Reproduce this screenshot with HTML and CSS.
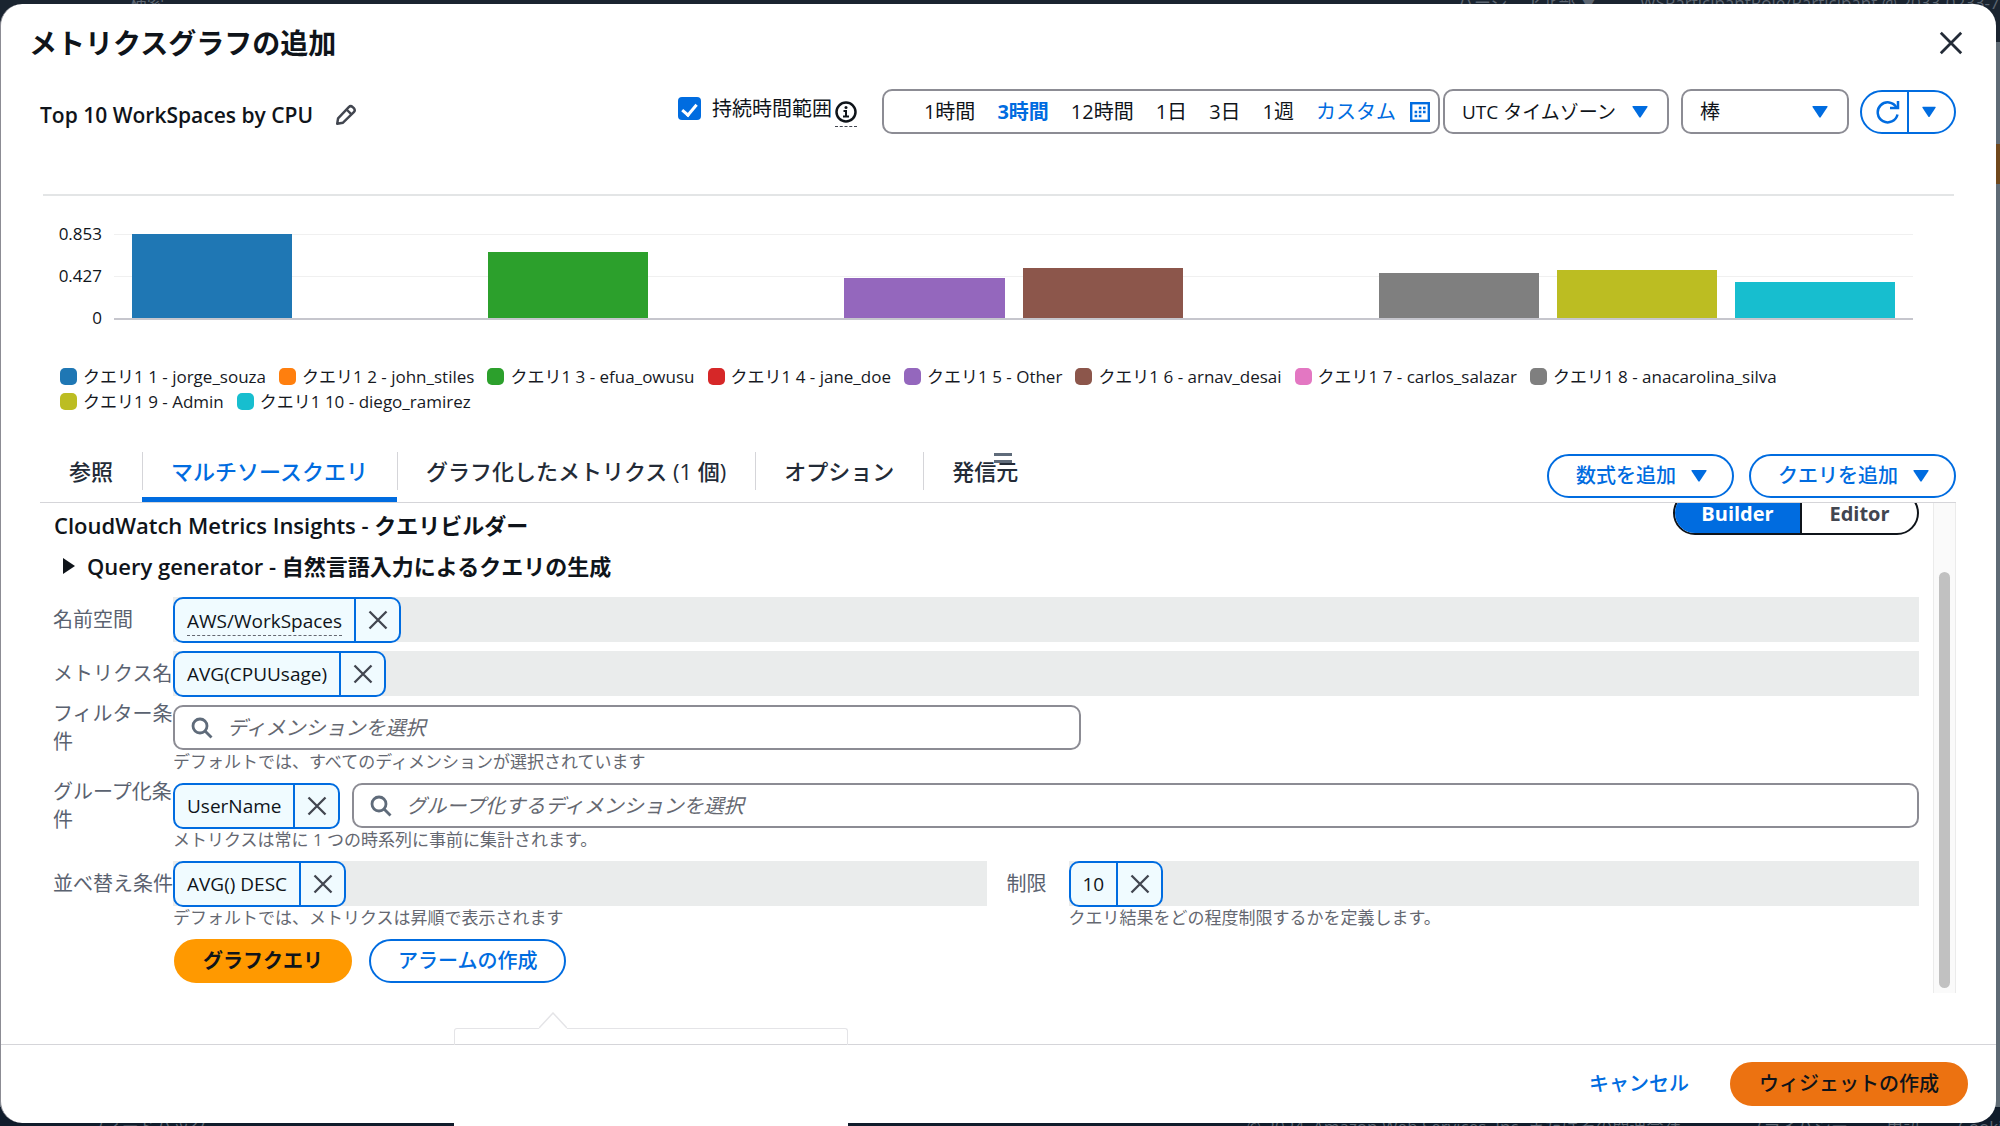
FILE: index.html
```html
<!DOCTYPE html>
<html lang="ja">
<head>
<meta charset="utf-8">
<title>メトリクスグラフの追加</title>
<link rel="stylesheet" href="styles.css">
</head>
<body>
<svg class="sprite" aria-hidden="true">
  <symbol id="x" viewBox="0 0 20 20"><path d="M1.500 1.500l17 17M18.500 1.500l-17 17" fill="none" stroke="currentColor" stroke-width="2.300"/></symbol>
  <symbol id="down" viewBox="0 0 16 12"><path d="M1 0h14q1 0 .5 1L8.700 11.300q-.7.900-1.400 0L.5 1Q0 0 1 0z" fill="currentColor"/></symbol>
  <symbol id="search" viewBox="0 0 22 22"><g fill="none" stroke="currentColor" stroke-width="2.800"><circle cx="9" cy="9" r="7"/><path d="M14 14l6.500 6.500"/></g></symbol>
</svg>

<div class="backdrop" aria-hidden="true">
  <div class="backdrop-nav"><span class="nav-search">検索</span><span class="nav-region">バージニア北部 ▼</span><span class="nav-user">WSParticipantRole/Participant @ 2033-0233-7</span></div>
  <div class="backdrop-side"></div>
  <div class="backdrop-foot"><span class="foot-left">フィードバック</span><span class="foot-copy">© 2024, Amazon Web Services, Inc. またはその関連会社</span><span class="foot-privacy">プライバシー</span><span>用語</span><span>Cookie</span></div>
  <div class="backdrop-notch"></div>
</div>

<main class="modal" role="dialog" aria-labelledby="dialog-title">
  <header class="modal-head">
    <h1 id="dialog-title">メトリクスグラフの追加</h1>
    <button class="bare close" aria-label="閉じる"><svg width="24" height="24"><use href="#x"/></svg></button>
  </header>

  <section class="body">
    <div class="toolbar">
      <div class="graph-name">
        <h2>Top 10 WorkSpaces by CPU</h2>
        <button class="bare" aria-label="名前を編集"><svg width="22" height="22" viewBox="0 0 20 20" fill="none" stroke="#424650" stroke-width="2.200" stroke-linejoin="round"><path d="M2 18l.8-5L12.500 2.800q1.700-1.700 3.600 0l1 1q1.700 1.800 0 3.500L7.300 17z"/><path d="M10.500 5l4.500 4.500"/></svg></button>
      </div>
      <div class="persist">
        <input type="checkbox" id="persist" checked>
        <label for="persist">持続時間範囲</label>
        <button class="bare info" aria-label="情報"><svg width="22" height="22" viewBox="0 0 22 22"><circle cx="11" cy="11" r="9.500" fill="none" stroke="#0f141a" stroke-width="2.500"/><circle cx="11" cy="6.600" r="1.500" fill="#0f141a"/><path d="M8.500 10H11v5M8 15.500h6" fill="none" stroke="#0f141a" stroke-width="2"/></svg></button>
      </div>
      <div class="ranges" role="group" aria-label="時間範囲">
        <button>1時間</button><button class="current">3時間</button><button>12時間</button><button>1日</button><button>3日</button><button>1週</button>
        <button class="custom">カスタム
          <svg width="20" height="20" viewBox="0 0 20 20"><rect x="1.200" y="1.200" width="17.600" height="17.600" fill="none" stroke="#006ce0" stroke-width="2.400"/><path d="M8.800 6h2.600M13 6h2.600M4.600 10h2.600M8.800 10h2.600M13 10h2.600M4.600 14h2.600M8.800 14h2.600" stroke="#006ce0" stroke-width="2.600"/></svg>
        </button>
      </div>
      <div class="pick zone"><select aria-label="タイムゾーン"><option>UTC タイムゾーン</option></select><svg width="16" height="12"><use href="#down"/></svg></div>
      <div class="pick kind"><select aria-label="グラフの種類"><option>棒</option></select><svg width="16" height="12"><use href="#down"/></svg></div>
      <div class="refresh">
        <button aria-label="更新"><svg width="24" height="24" viewBox="0 0 24 24" fill="none" stroke="currentColor" stroke-width="2.500"><path d="M21.500 14.500A10 10 0 1 1 20.500 7.500"/><path d="M22 1v7h-8"/></svg></button>
        <button aria-label="更新オプション"><svg width="14" height="12"><use href="#down"/></svg></button>
      </div>
    </div>

    <hr>

    <div class="chart">
      <div class="axis"><span>0.853</span><span>0.427</span><span>0</span></div>
      <div class="plot">
        <i style="height:100%;background:#1f77b4"></i><i></i><i style="height:78%;background:#2ca02c"></i><i></i><i style="height:48%;background:#9467bd"></i><i style="height:59%;background:#8c564b"></i><i></i><i style="height:53%;background:#7f7f7f"></i><i style="height:57%;background:#bcbd22"></i><i style="height:43%;background:#17becf"></i>
      </div>
    </div>
    <ul class="legend">
      <li><i style="background:#1f77b4"></i>クエリ1 1 - jorge_souza</li>
      <li><i style="background:#ff7f0e"></i>クエリ1 2 - john_stiles</li>
      <li><i style="background:#2ca02c"></i>クエリ1 3 - efua_owusu</li>
      <li><i style="background:#d62728"></i>クエリ1 4 - jane_doe</li>
      <li><i style="background:#9467bd"></i>クエリ1 5 - Other</li>
      <li><i style="background:#8c564b"></i>クエリ1 6 - arnav_desai</li>
      <li><i style="background:#e377c2"></i>クエリ1 7 - carlos_salazar</li>
      <li><i style="background:#7f7f7f"></i>クエリ1 8 - anacarolina_silva</li>
      <li><i style="background:#bcbd22"></i>クエリ1 9 - Admin</li>
      <li><i style="background:#17becf"></i>クエリ1 10 - diego_ramirez</li>
    </ul>

    <div class="tabbar">
      <span class="grip" aria-hidden="true"></span>
      <div class="tabs" role="tablist">
        <button role="tab">参照</button>
        <button role="tab" class="active" aria-selected="true">マルチソースクエリ</button>
        <button role="tab">グラフ化したメトリクス (1 個)</button>
        <button role="tab">オプション</button>
        <button role="tab">発信元</button>
      </div>
      <div class="tab-actions">
        <button class="pill">数式を追加<svg width="16" height="12"><use href="#down"/></svg></button>
        <button class="pill">クエリを追加<svg width="16" height="12"><use href="#down"/></svg></button>
      </div>
    </div>

    <div class="panel">
      <div class="builder">
        <div class="builder-head">
          <h3>CloudWatch Metrics Insights - クエリビルダー</h3>
          <div class="mode" role="group" aria-label="モード"><button class="on">Builder</button><button>Editor</button></div>
        </div>
        <button class="bare generator"><svg width="12" height="16" viewBox="0 0 12 16"><path d="M0 0l12 8-12 8z" fill="#0f141a"/></svg>Query generator - 自然言語入力によるクエリの生成</button>

        <div class="form">
          <span class="label">名前空間</span>
          <div class="field filled"><span class="chip"><span class="chip-text"><abbr>AWS/WorkSpaces</abbr></span><button aria-label="削除"><svg width="20" height="20"><use href="#x"/></svg></button></span></div>

          <span class="label">メトリクス名</span>
          <div class="field filled"><span class="chip"><span class="chip-text">AVG(CPUUsage)</span><button aria-label="削除"><svg width="20" height="20"><use href="#x"/></svg></button></span></div>

          <label class="label" for="filter">フィルター条件</label>
          <div>
            <div class="field"><div class="search short"><svg width="22" height="22"><use href="#search"/></svg><input id="filter" placeholder="ディメンションを選択"></div></div>
            <p>デフォルトでは、すべてのディメンションが選択されています</p>
          </div>

          <label class="label" for="group">グループ化条件</label>
          <div>
            <div class="field"><span class="chip"><span class="chip-text">UserName</span><button aria-label="削除"><svg width="20" height="20"><use href="#x"/></svg></button></span>
              <div class="search"><svg width="22" height="22"><use href="#search"/></svg><input id="group" placeholder="グループ化するディメンションを選択"></div></div>
            <p>メトリクスは常に 1 つの時系列に事前に集計されます。</p>
          </div>

          <span class="label">並べ替え条件</span>
          <div class="split">
            <div>
              <div class="field filled"><span class="chip"><span class="chip-text">AVG() DESC</span><button aria-label="削除"><svg width="20" height="20"><use href="#x"/></svg></button></span></div>
              <p>デフォルトでは、メトリクスは昇順で表示されます</p>
            </div>
            <span class="label limit">制限</span>
            <div>
              <div class="field filled"><span class="chip"><span class="chip-text">10</span><button aria-label="削除"><svg width="20" height="20"><use href="#x"/></svg></button></span></div>
              <p>クエリ結果をどの程度制限するかを定義します。</p>
            </div>
          </div>

          <div class="actions">
            <button class="pill graph">グラフクエリ</button>
            <button class="pill">アラームの作成</button>
          </div>
        </div>
      </div>
      <div class="scrollbar" aria-hidden="true"><i></i></div>
    </div>
  </section>

  <footer class="modal-foot">
    <div class="popover" aria-hidden="true"><svg width="28" height="17" viewBox="0 0 28 17"><path d="M0 16L14 1l14 15v1H0z" fill="#fff"/><path d="M0 16L14 1l14 15" fill="none" stroke="#e4e4e7" stroke-width="1.500"/></svg></div>
    <button class="bare cancel">キャンセル</button>
    <button class="pill create">ウィジェットの作成</button>
  </footer>
</main>
</body>
</html>
```
FILE: styles.css
```css
* { box-sizing: border-box; }

body {
  margin: 0;
  position: relative;
  min-height: 100vh;
  padding: 4px 4px 3px 0;
  background: #5f6b75;
  color: #0f141a;
  font: 20px/28px "Open Sans", "Noto Sans CJK JP", sans-serif;
}

h1, h2, h3, p, ul { margin: 0; padding: 0; }

button, input, select { font: inherit; color: inherit; }

button {
  display: flex;
  align-items: center;
  justify-content: center;
  margin: 0;
  padding: 0;
  border: 0;
  background: none;
  white-space: nowrap;
}

svg { display: block; flex: none; }
.sprite { position: absolute; width: 0; height: 0; }

/* Dimmed page behind the dialog */
.backdrop {
  position: absolute;
  inset: 0;
  overflow: hidden;
  font-size: 17px;
  line-height: 24px;
  white-space: nowrap;
  color: #5d6672;
}
.backdrop-nav {
  position: absolute;
  inset: 0 0 auto;
  height: 42px;
  background: #1a2430;
}
.backdrop-nav span { position: absolute; top: -9px; }
.nav-search { left: 130px; }
.nav-region { left: 1457px; }
.nav-user { left: 1640px; }
.backdrop-side {
  position: absolute;
  top: 144px;
  right: 0;
  width: 20px;
  height: 40px;
  background: #70481c;
}
.backdrop-foot {
  position: absolute;
  inset: auto 0 0;
  height: 19px;
  padding: 8px 0 0 88px;
  background: #101c2b;
  display: flex;
  gap: 38px;
}
.foot-copy { margin: 0 28px 0 auto; }
.backdrop-foot span:last-child { margin-right: -12px; }
.backdrop-notch {
  position: absolute;
  left: 454px;
  bottom: 0;
  width: 394px;
  height: 12px;
  background: #fff;
}

.modal {
  position: relative;
  display: flex;
  flex-direction: column;
  min-height: calc(100vh - 7px);
  background: #fff;
  border-left: 1px solid #8c8c94;
  border-radius: 22px;
}

.modal-head {
  display: flex;
  justify-content: space-between;
  align-items: center;
  padding: 20px 33px 0 28px;
}
h1 { font-size: 28px; line-height: 38px; font-weight: 600; }
.close { color: #232b37; }

.body {
  flex: 1;
  display: flex;
  flex-direction: column;
  padding: 27px 40px 0 39px;
}

.toolbar { display: flex; align-items: center; height: 45px; }
.graph-name { display: flex; align-items: center; gap: 22px; padding-top: 6px; margin-right: auto; }
h2 { font-size: 21px; line-height: 28px; font-weight: 600; }

.persist { display: flex; align-items: center; padding-bottom: 6px; margin-right: 25px; }
.persist input {
  appearance: none;
  width: 23px;
  height: 23px;
  margin: 0 11px 0 0;
  border-radius: 4px;
  background: #006ce0;
  display: grid;
  place-items: center;
}
.persist input::after {
  content: "";
  width: 6px;
  height: 12px;
  border: solid #fff;
  border-width: 0 3px 3px 0;
  transform: rotate(40deg);
}
.info { margin: 10px 0 0 3px; padding-bottom: 3px; border-bottom: 1px dashed #424650; }

.ranges {
  display: flex;
  align-items: center;
  gap: 22px;
  height: 45px;
  padding: 0 8px 0 40px;
  border: 2px solid #8c8c94;
  border-radius: 10px;
  margin-right: 3px;
}
.current { font-weight: 700; color: #006ce0; }
.custom { gap: 14px; color: #006ce0; }

.pick { position: relative; }
.pick select {
  appearance: none;
  width: 100%;
  height: 45px;
  padding: 0 17px;
  border: 2px solid #8c8c94;
  border-radius: 10px;
  background: #fff;
}
.pick svg { position: absolute; right: 21px; top: 17px; color: #006ce0; pointer-events: none; }
.zone { width: 226px; margin-right: 12px; }
.zone select { font-size: 19px; }
.kind { width: 168px; margin-right: 11px; }

.refresh {
  display: flex;
  width: 96px;
  height: 44px;
  border: 2px solid #006ce0;
  border-radius: 22px;
  color: #006ce0;
}
.refresh button { flex: 1; }
.refresh button:first-child { border-right: 2px solid #006ce0; padding-left: 6px; }
.refresh button:last-child { padding-right: 6px; }

hr { width: calc(100% - 5px); height: 2px; margin: 60px 3px 38px; border: 0; background: #e3e5e6; }

.chart { display: flex; height: 84px; padding-right: 43px; }
.axis {
  display: flex;
  flex-direction: column;
  justify-content: space-between;
  width: 62px;
  margin: -14px 12px -14px 0;
  text-align: right;
  font-size: 17px;
}
.plot {
  flex: 1;
  display: grid;
  grid-template-columns: repeat(10, 1fr);
  gap: 18px;
  align-items: end;
  padding: 0 18px;
  background: linear-gradient(#f0f0f0 1px, transparent 1px) 0 0 / 100% 42px;
  box-shadow: 0 2px #c6c6cd;
}

.legend {
  display: flex;
  flex-wrap: wrap;
  column-gap: 13px;
  margin: 46px 150px 0 20px;
  font-size: 17px;
  line-height: 25px;
  list-style: none;
}
.legend li { display: flex; align-items: center; gap: 6px; color: #16191f; }
.legend i { width: 17px; height: 17px; border-radius: 5px; }

.tabbar {
  position: relative;
  display: flex;
  justify-content: space-between;
  margin-top: 38px;
  border-bottom: 1px solid #d5d5d9;
}
.grip {
  position: absolute;
  left: 50%;
  margin-left: -4px;
  top: 1px;
  width: 18px;
  height: 10px;
  border: solid #5f6b7a;
  border-width: 3px 0;
}
.tabs { display: flex; }
.tabs button {
  position: relative;
  height: 50px;
  padding: 0 29px 12px;
  font-size: 22px;
  font-weight: 500;
  color: #232b37;
}
.tabs button + button::before {
  content: "";
  position: absolute;
  left: 0;
  top: 0;
  width: 1px;
  height: 38px;
  background: #d5d5d9;
}
.tabs .active { color: #006ce0; box-shadow: inset 0 -5px #006ce0; }
.tab-actions { display: flex; gap: 15px; padding-top: 2px; }

.pill {
  height: 44px;
  padding: 0 27px;
  border: 2px solid #006ce0;
  border-radius: 22px;
  color: #006ce0;
  background: #fff;
  font-weight: 500;
}
.pill svg { margin-left: 15px; }
.tab-actions .pill { padding-right: 25px; }

.panel { display: flex; gap: 14px; height: 490px; overflow: hidden; }
.builder { flex: 1; padding: 8px 0 0 14px; }
.builder-head { display: flex; justify-content: space-between; height: 28px; }
h3, .generator { font-size: 22px; line-height: 28px; font-weight: 600; }
.mode {
  display: flex;
  height: 44px;
  margin-top: -20px;
  border: 2px solid #0f141a;
  border-radius: 22px;
  overflow: hidden;
}
.mode button { width: 115px; font-weight: 700; color: #424650; padding-top: 2px; }
.mode .on { width: 127px; background: #006ce0; color: #fff; border-right: 2px solid #0f141a; }
.generator { gap: 12px; margin: 13px 0 17px 9px; }

.form {
  display: grid;
  grid-template-columns: 120px 1fr;
  row-gap: 8px;
  margin-left: -1px;
}
.label { display: flex; align-items: center; height: 46px; color: #5a6270; line-break: anywhere; }
.field { display: flex; height: 46px; gap: 12px; }
.filled { background: linear-gradient(#eaecec, #eaecec) 0 0 / 100% 45px no-repeat; }
.form p { margin: -1px 0 1px; font-size: 17px; line-height: 24px; color: #656871; }

.chip {
  display: flex;
  border: 2px solid #006ce0;
  border-radius: 10px;
  background: #f0fbff;
}
.chip-text { display: flex; align-items: center; padding: 0 12px; font-size: 19px; }
.chip abbr { line-height: 28px; border-bottom: 1px dashed #656871; margin-top: 2px; }
.chip button { width: 45px; border-left: 2px solid #006ce0; color: #424650; }

.search {
  flex: 1;
  display: flex;
  align-items: center;
  gap: 14px;
  height: 45px;
  padding: 0 16px;
  border: 2px solid #8c8c94;
  border-radius: 10px;
  color: #5f6b7a;
}
.short { flex: none; width: 52%; }
.search input { flex: 1; min-width: 0; padding: 0; border: 0; outline: 0; background: none; }
.search input::placeholder { color: #656871; font-style: italic; opacity: 1; }

.split { display: grid; grid-template-columns: 22fr 82px 23fr; }
.limit { padding-left: 20px; }
.actions { grid-column: 2; display: flex; gap: 16px; }
.actions .pill { margin-left: 1px; }
.pill.graph { border-color: #ff9900; background: #ff9900; color: #0f141a; font-weight: 700; }

.scrollbar { width: 23px; padding: 69px 4px 5px; background: #fafafa; border: solid #ebebeb; border-width: 0 1px; }
.scrollbar i { display: block; height: 100%; margin: 0 1px; border-radius: 7px; background: #c1c1c1; }

.modal-foot {
  position: relative;
  display: flex;
  align-items: center;
  justify-content: flex-end;
  gap: 41px;
  height: 79px;
  margin-top: 50px;
  padding: 0 28px 0 0;
  border-top: 1px solid #d5d5d9;
}
.cancel { color: #006ce0; font-weight: 500; }
.pill.create { border-color: #ec7211; background: #ec7211; color: #0f141a; }

.popover {
  position: absolute;
  left: 453px;
  bottom: 100%;
  width: 394px;
  height: 17px;
  border: 1px solid #e4e4e7;
  border-bottom: 0;
  border-radius: 3px 3px 0 0;
}
.popover svg { position: absolute; left: 84px; top: -17px; }
```
